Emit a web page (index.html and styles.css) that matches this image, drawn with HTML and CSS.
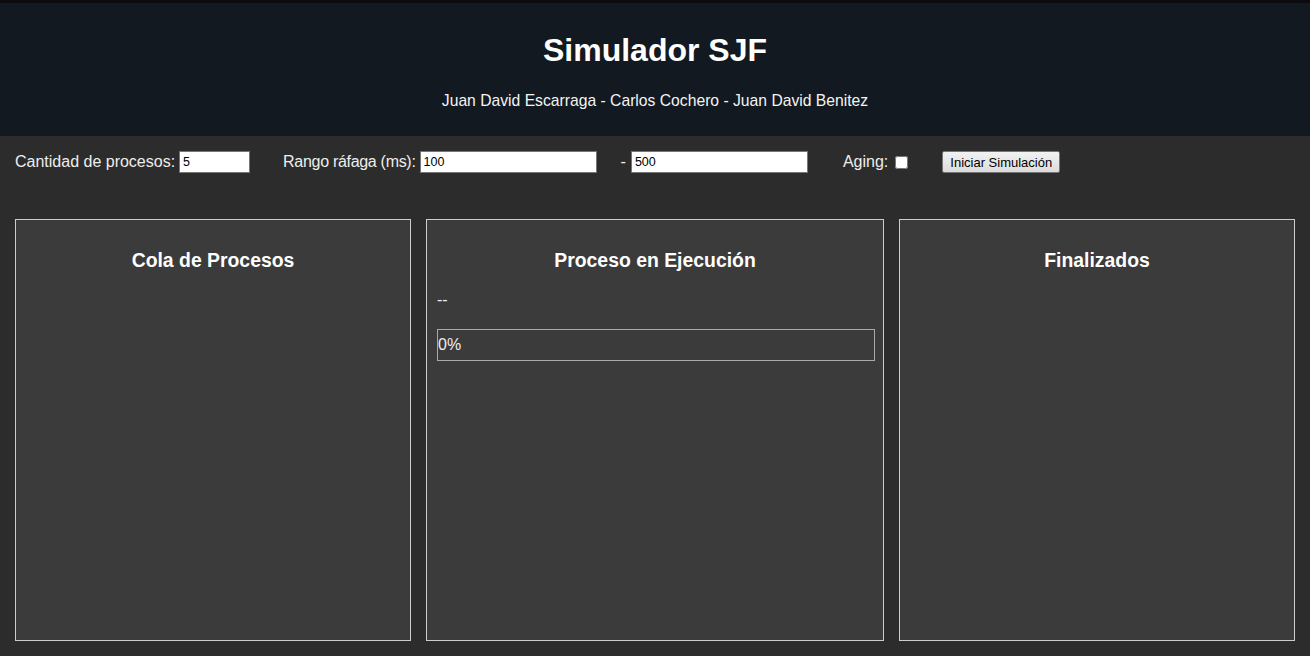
FILE: index.html
```html
<!DOCTYPE html>
<html lang="es">
<head>
<meta charset="utf-8">
<title>Simulador SJF</title>
<link rel="stylesheet" href="styles.css">
</head>
<body>
<div class="page">
  <header class="header">
    <h1 class="title">Simulador SJF</h1>
    <p class="authors">Juan David Escarraga - Carlos Cochero - Juan David Benitez</p>
  </header>
  <section class="controls">
    <label class="ctrl ctrl-count">Cantidad de procesos:<input class="field field-small" type="text" value="5"></label>
    <label class="ctrl ctrl-range">Rango ráfaga (ms):<input class="field field-wide" type="text" value="100"></label>
    <label class="ctrl ctrl-dash">-<input class="field field-wide field-dash" type="text" value="500"></label>
    <label class="ctrl ctrl-aging">Aging:<input class="check" type="checkbox"></label>
    <button class="btn" type="button">Iniciar Simulación</button>
  </section>
  <main class="panels">
    <div class="panel panel-side">
      <h2 class="panel-title">Cola de Procesos</h2>
    </div>
    <div class="panel panel-mid">
      <h2 class="panel-title">Proceso en Ejecución</h2>
      <div class="current">--</div>
      <div class="progress"><span class="progress-text">0%</span></div>
    </div>
    <div class="panel panel-side">
      <h2 class="panel-title">Finalizados</h2>
    </div>
  </main>
</div>
</body>
</html>
```
FILE: styles.css
```css
html {
  background: #ffffff;
}
body {
  margin: 0;
  font-family: "Liberation Sans", Arial, sans-serif;
  color: #ffffff;
}
.page {
  height: 656px;
  background: #2c2c2c;
  display: flex;
  flex-direction: column;
}
.header {
  background: #121920;
  border-top: 3px solid #0b0b10;
  height: 133px;
  box-sizing: content-box;
  text-align: center;
  padding: 0;
}
.title {
  margin: 0;
  padding-top: 29px;
  font-size: 32px;
  line-height: 37px;
  font-weight: bold;
}
.authors {
  margin: 0;
  padding-top: 23px;
  font-size: 15.7px;
  line-height: 18px;
  color: #f4f4f4;
}
.controls {
  display: flex;
  align-items: center;
  padding: 15px 15px 0 15px;
  height: 22px;
  font-size: 16px;
  color: #eeeeee;
}
.ctrl {
  display: flex;
  align-items: center;
}
.ctrl-range {
  margin-left: 33px;
  letter-spacing: -0.3px;
}
.ctrl-dash { margin-left: 24px; }
.ctrl-aging { margin-left: 35px; }
.field {
  box-sizing: border-box;
  height: 22px;
  border: 1px solid #767676;
  background: #ffffff;
  color: #000000;
  font-family: "Liberation Sans", Arial, sans-serif;
  font-size: 12.5px;
  letter-spacing: 0;
  padding: 1px 3px;
  margin: 0 0 0 4px;
}
.field-small { width: 71px; }
.field-wide { width: 177px; }
.field-dash { margin-left: 5px; }
.check {
  margin: 0 0 0 7px;
  width: 13px;
  height: 13px;
}
.btn {
  margin-left: 34px;
  box-sizing: border-box;
  height: 22px;
  width: 118px;
  padding: 0;
  border: 1px solid #767676;
  border-radius: 2px;
  background: linear-gradient(#f2f2f2, #dcdcdc);
  color: #000000;
  font-family: "Liberation Sans", Arial, sans-serif;
  font-size: 13px;
}
.panels {
  display: flex;
  gap: 15px;
  padding: 0 15px;
  margin-top: 46px;
  height: 422px;
}
.panel {
  box-sizing: border-box;
  height: 422px;
  min-width: 0;
  background: #3b3b3b;
  border: 1px solid #cccccc;
  padding: 10px;
}
.panel-side { flex: 0 0 396px; }
.panel-mid { flex: 0 0 458px; }
.panel-title {
  margin: 18px 0 0 0;
  text-align: center;
  font-size: 19.4px;
  line-height: 24px;
  font-weight: bold;
}
.current {
  margin-top: 19px;
  font-size: 16px;
  line-height: 18px;
  color: #eeeeee;
}
.progress {
  margin-top: 20px;
  margin-right: -2px;
  box-sizing: border-box;
  height: 32px;
  border: 1px solid #aaaaaa;
  display: flex;
  align-items: center;
}
.progress-text {
  font-size: 16px;
  color: #eeeeee;
}
```
